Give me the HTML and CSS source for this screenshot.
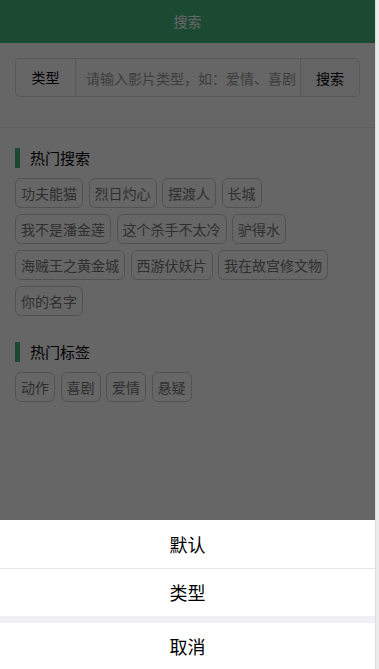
FILE: index.html
```html
<!DOCTYPE html>
<html lang="zh-CN">
<head>
  <meta charset="UTF-8">
  <meta name="viewport" content="width=device-width, initial-scale=1">
  <title>搜索</title>
  <link rel="stylesheet" href="styles.css">
</head>
<body>

  <div class="page">
    <header class="header">搜索</header>

    <div class="search">
      <div class="search-box">
        <div class="search-type">类型</div>
        <input class="search-input" type="text" placeholder="请输入影片类型，如：爱情、喜剧">
        <button class="search-btn">搜索</button>
      </div>
    </div>

    <div class="section">
      <h2 class="section-title">热门搜索</h2>
      <div class="tags">
        <span class="tag">功夫能猫</span>
        <span class="tag">烈日灼心</span>
        <span class="tag">摆渡人</span>
        <span class="tag">长城</span>
        <span class="tag">我不是潘金莲</span>
        <span class="tag">这个杀手不太冷</span>
        <span class="tag">驴得水</span>
        <span class="tag">海贼王之黄金城</span>
        <span class="tag">西游伏妖片</span>
        <span class="tag">我在故宫修文物</span>
        <span class="tag">你的名字</span>
      </div>
    </div>

    <div class="section">
      <h2 class="section-title">热门标签</h2>
      <div class="tags">
        <span class="tag">动作</span>
        <span class="tag">喜剧</span>
        <span class="tag">爱情</span>
        <span class="tag">悬疑</span>
      </div>
    </div>
  </div>

  <!-- action sheet -->
  <div class="mask"></div>
  <div class="sheet">
    <div class="sheet-item">默认</div>
    <div class="sheet-item sheet-line">类型</div>
    <div class="sheet-gap"></div>
    <div class="sheet-item sheet-cancel">取消</div>
  </div>

</body>
</html>
```

FILE: styles.css
```css
* {
  box-sizing: border-box;
  margin: 0;
  padding: 0;
}

html {
  background-color: #ececec;
}

body {
  width: 375px;
  min-height: 669px;
  background-color: #fff;
  box-shadow: 1px 0 0 #dcdcdc;
  font-family: "Noto Sans CJK SC", "Noto Sans", sans-serif;
  color: #000;
}

.header {
  height: 43px;
  line-height: 43px;
  background-color: #48b77c;
  color: #fff;
  font-size: 14px;
  text-align: center;
}

.search {
  padding: 15px 15px 30px;
  border-bottom: 1px solid #eee;
}

.search-box {
  display: flex;
  height: 39px;
  border: 1px solid #ddd;
  border-radius: 5px;
  overflow: hidden;
}

.search-type {
  width: 60px;
  line-height: 37px;
  text-align: center;
  font-size: 14px;
  color: #000;
  border-right: 1px solid #ddd;
}

.search-input {
  flex: 1;
  min-width: 0;
  border: none;
  outline: none;
  padding: 0 4px 0 10px;
  font-family: inherit;
  font-size: 14px;
  background: transparent;
}

.search-input::placeholder {
  color: #999;
}

.search-btn {
  width: 59px;
  border: none;
  border-left: 1px solid #ddd;
  background-color: #fafafa;
  font-family: inherit;
  font-size: 14px;
  color: #000;
}

.section {
  padding: 20px 15px 6px;
}

.section-title {
  height: 20px;
  line-height: 20px;
  border-left: 5px solid #48b77c;
  padding-left: 10px;
  margin-bottom: 10px;
  font-size: 15px;
  font-weight: normal;
  color: #000;
}

.tags {
  display: flex;
  flex-wrap: wrap;
  gap: 6px 5.5px;
}

.tag {
  height: 30px;
  line-height: 28px;
  padding: 0 5px;
  border: 1px solid #ccc;
  border-radius: 6px;
  font-size: 14px;
  color: #777;
}

.mask {
  position: fixed;
  top: 0;
  left: 0;
  width: 375px;
  height: 100%;
  background: rgba(0, 0, 0, 0.6);
}

.sheet {
  position: fixed;
  left: 0;
  bottom: 0;
  width: 375px;
  background-color: #fff;
}

.sheet-item {
  height: 48px;
  line-height: 48px;
  text-align: center;
  font-size: 18px;
  color: #000;
}

.sheet-line {
  border-top: 1px solid #e5e5e5;
  line-height: 47px;
}

.sheet-gap {
  height: 7px;
  background-color: #efeff4;
}

.sheet-cancel {
  height: 46px;
  line-height: 46px;
}
```
